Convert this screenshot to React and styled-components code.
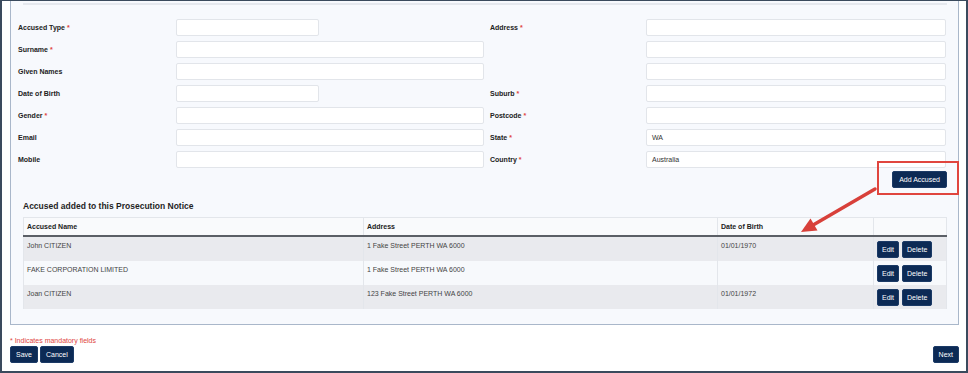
import React from "react";
import styled, { createGlobalStyle } from "styled-components";

const GlobalStyle = createGlobalStyle`
  * { box-sizing: border-box; }
  body {
    margin: 0;
    background: #ffffff;
    font-family: "Liberation Sans", Arial, sans-serif;
  }
`;

const NAVY = "#0c2a55";
const RED = "#e0453e";

const Frame = styled.div`
  position: relative;
  width: 968px;
  height: 373px;
  border-style: solid;
  border-color: #3a4a5d;
  border-width: 1px 2px 2px 2px;
  display: flex;
  flex-direction: column;
  background: #fff;
`;

const Panel = styled.div`
  margin: 0 7px 0 8px;
  background: #f7f9fd;
  border: 1px solid #a9b7ca;
  border-top: none;
  padding: 0 11px 15px 0;
`;

const TopRule = styled.div`
  height: 2px;
  margin: 2px 0 0 12px;
  background: #e5e8ee;
`;

const FormGrid = styled.div`
  display: grid;
  grid-template-columns: 158px 308px 162px 300px;
  grid-auto-rows: 17px;
  row-gap: 5px;
  margin: 14px 0 0 7px;
`;

const Label = styled.div`
  display: flex;
  align-items: center;
  padding-left: ${(p) => (p.$right ? "6px" : "0")};
  font-size: 7px;
  font-weight: bold;
  color: #222;
`;

const Req = styled.span`
  color: ${RED};
  margin-left: 2px;
`;

const Input = styled.div`
  width: ${(p) => (p.$narrow ? "143px" : "100%")};
  height: 17px;
  background: #fff;
  border: 1px solid #e2e5ea;
  border-radius: 2px;
  font-size: 7px;
  color: #333;
  display: flex;
  align-items: center;
  padding-left: 5px;
`;

const ActionRow = styled.div`
  display: flex;
  justify-content: flex-end;
  margin-top: 3px;
`;

const Highlight = styled.span`
  position: relative;
  display: inline-flex;
`;

const RedBox = styled.span`
  position: absolute;
  left: -15px;
  right: -12px;
  top: -10px;
  bottom: -7px;
  border: 2px solid ${RED};
  pointer-events: none;
`;

const Button = styled.button`
  height: 17px;
  padding: 0 ${(p) => p.$pad ?? 5}px;
  background: ${NAVY};
  color: #fff;
  border: 1px solid #1b3a66;
  border-radius: 2px;
  font-family: inherit;
  font-size: 7px;
  line-height: 1;
  cursor: pointer;
`;

const Section = styled.div`
  padding-left: 12px;
`;

const Title = styled.h3`
  margin: 13px 0 6px;
  font-size: 8.5px;
  line-height: 10px;
  font-weight: bold;
  color: #1f1f1f;
`;

const Table = styled.table`
  width: 923px;
  table-layout: fixed;
  border-collapse: collapse;
  font-size: 7px;
`;

const Th = styled.th`
  height: 18px;
  padding: 0 4px 0 3px;
  text-align: left;
  font-weight: bold;
  color: #222;
  background: #f9fafc;
  border: 1px solid #e3e6eb;
  border-bottom: 2px solid #5b5f66;
`;

const Tr = styled.tr`
  background: ${(p) => (p.$alt ? "#f7f9fc" : "#e9eaee")};
`;

const Td = styled.td`
  padding: 4px 3px 3px 3px;
  height: 24px;
  vertical-align: top;
  color: #444;
  line-height: 9px;
  border-left: 1px solid #e3e6eb;
  border-right: 1px solid #e3e6eb;
`;

const Actions = styled.div`
  display: flex;
  gap: 3px;
`;

const Footer = styled.div`
  padding: 11px 7px 0 8px;
`;

const Mandatory = styled.div`
  font-size: 7px;
  line-height: 9px;
  color: ${RED};
  margin-bottom: 1px;
`;

const FooterButtons = styled.div`
  display: flex;
  align-items: center;
  gap: 2px;
`;

const Spacer = styled.div`
  flex: 1;
`;

const ArrowLayer = styled.svg`
  position: absolute;
  left: 788px;
  top: 179px;
  pointer-events: none;
`;

const fieldRows = [
  { left: "Accused Type", req: true, narrow: true, right: "Address", rreq: true },
  { left: "Surname", req: true },
  { left: "Given Names" },
  { left: "Date of Birth", narrow: true, right: "Suburb", rreq: true },
  { left: "Gender", req: true, right: "Postcode", rreq: true },
  { left: "Email", right: "State", rreq: true, rval: "WA" },
  { left: "Mobile", right: "Country", rreq: true, rval: "Australia" },
];

const accused = [
  { name: "John CITIZEN", address: "1 Fake Street PERTH WA 6000", dob: "01/01/1970" },
  { name: "FAKE CORPORATION LIMITED", address: "1 Fake Street PERTH WA 6000", dob: "" },
  { name: "Joan CITIZEN", address: "123 Fake Street PERTH WA 6000", dob: "01/01/1972" },
];

const Arrow = () => (
  <ArrowLayer width="95" height="60" viewBox="0 0 95 60">
    <line x1="85" y1="9" x2="24" y2="44.5" stroke="#d8403a" strokeWidth="3.5" strokeLinecap="round" />
    <polygon points="11,52 27.5,50.5 20.5,38.4" fill="#d8403a" />
  </ArrowLayer>
);

const App = () => {
  return (
    <>
      <GlobalStyle />
      <Frame>
        <Panel>
          <TopRule />
          <FormGrid>
            {fieldRows.map((r) => (
              <React.Fragment key={r.left}>
                <Label>
                  {r.left}
                  {r.req && <Req>*</Req>}
                </Label>
                <div>
                  <Input $narrow={r.narrow} />
                </div>
                <Label $right>
                  {r.right}
                  {r.rreq && <Req>*</Req>}
                </Label>
                <Input>{r.rval}</Input>
              </React.Fragment>
            ))}
          </FormGrid>
          <ActionRow>
            <Highlight>
              <Button $pad={6}>Add Accused</Button>
              <RedBox />
            </Highlight>
          </ActionRow>
          <Section>
            <Title>Accused added to this Prosecution Notice</Title>
            <Table>
              <colgroup>
                <col style={{ width: 340 }} />
                <col style={{ width: 354 }} />
                <col style={{ width: 156 }} />
                <col style={{ width: 73 }} />
              </colgroup>
              <thead>
                <tr>
                  <Th>Accused Name</Th>
                  <Th>Address</Th>
                  <Th>Date of Birth</Th>
                  <Th />
                </tr>
              </thead>
              <tbody>
                {accused.map((a, i) => (
                  <Tr key={a.name} $alt={i % 2 === 1}>
                    <Td>{a.name}</Td>
                    <Td>{a.address}</Td>
                    <Td>{a.dob}</Td>
                    <Td>
                      <Actions>
                        <Button $pad={4}>Edit</Button>
                        <Button $pad={4}>Delete</Button>
                      </Actions>
                    </Td>
                  </Tr>
                ))}
              </tbody>
            </Table>
          </Section>
        </Panel>
        <Footer>
          <Mandatory>* Indicates mandatory fields</Mandatory>
          <FooterButtons>
            <Button>Save</Button>
            <Button>Cancel</Button>
            <Spacer />
            <Button>Next</Button>
          </FooterButtons>
        </Footer>
        <Arrow />
      </Frame>
    </>
  );
};

export default App;
